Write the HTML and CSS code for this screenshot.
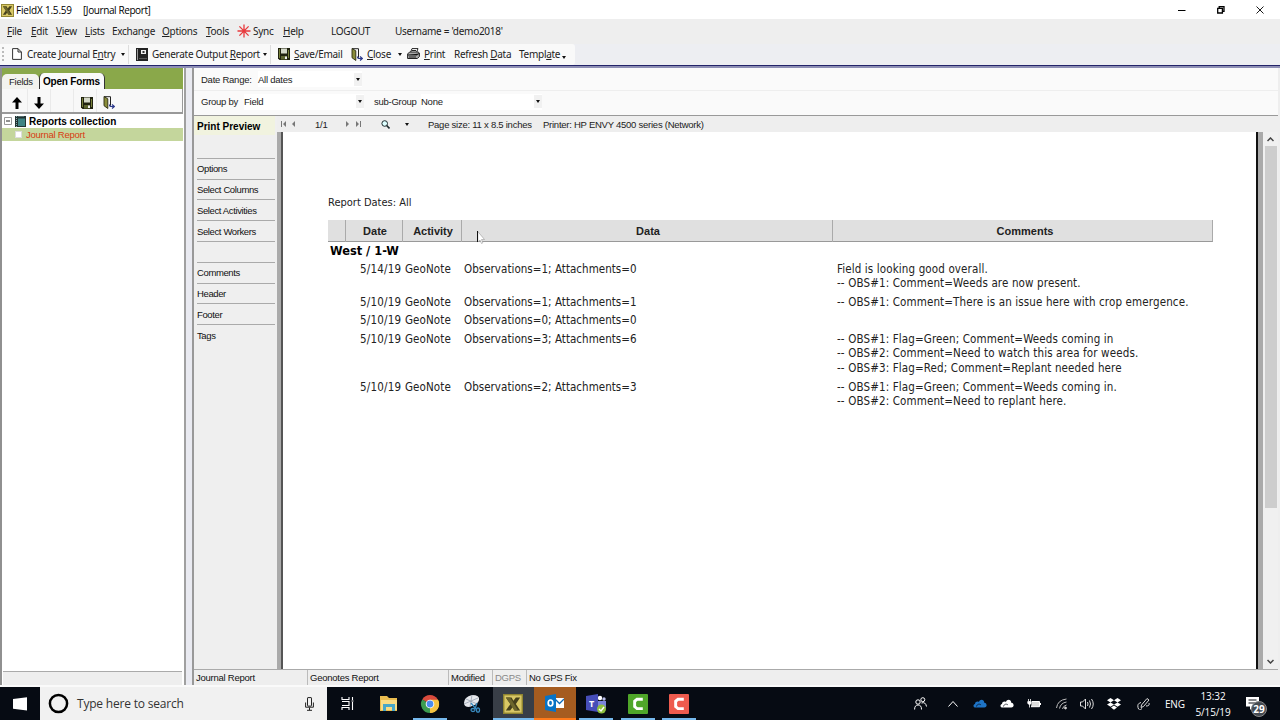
FILE: index.html
```html
<!DOCTYPE html>
<html lang="en">
<head>
    <meta charset="UTF-8">
    <meta name="viewport" content="width=device-width, initial-scale=1.0">
    <title>FieldX 1.5.59 - [Journal Report]</title>
    <link rel="stylesheet" href="styles.css">
</head>
<body>
    <svg width="0" height="0" class="defs">
        <symbol id="logo" viewBox="0 0 14 14">
            <rect width="14" height="14" fill="#8f8430"/>
            <rect x="1" y="1" width="12" height="12" fill="#d8c765"/>
            <path d="M2 2.5h4l1.3 2.3L9 2.5h3L9 7l3 4.5H8L6.700 9.200 5 11.500H2L5.200 7z" fill="#45401c"/>
            <path d="M2 2.500h3l5.500 9H8z" fill="#6c652c"/>
        </symbol>
        <symbol id="floppy" viewBox="0 0 12 12">
            <path d="M0 0h12v12H1.500L0 10.500z" fill="#20220f"/>
            <path d="M1 1h1v9H1zM10 2h1v8h-1z" fill="#77803a"/>
            <rect x="3" y="0.500" width="6" height="5" fill="#d4d8c8"/>
            <rect x="3" y="8" width="6" height="3.500" fill="#5e6630"/>
            <rect x="7" y="8.500" width="2" height="2.500" fill="#f0f0f0"/>
        </symbol>
        <symbol id="door" viewBox="0 0 12 13">
            <path d="M1 .7h6.500v9" fill="none" stroke="#222"/>
            <path d="M1 .5l3.800 2.300v9.700L1 9.700z" fill="#8a8d3a" stroke="#2b2b12" stroke-width=".9"/>
            <path d="M6.500 8.500q0 2 2 2h2M9 8.500l2.300 2L9 12.500" fill="none" stroke="#2d3a8c" stroke-width="1.200"/>
        </symbol>
        <symbol id="book" viewBox="0 0 12 13">
            <path d="M0 0h12v13H0z" fill="#222"/>
            <path d="M1 1h1v11H1z" fill="#999"/>
            <rect x="5" y="2" width="5" height="4" fill="#eee"/>
            <rect x="6.500" y="3" width="2" height="2" fill="#333"/>
            <path d="M3 10.500h8" stroke="#555"/>
        </symbol>
        <symbol id="camtasia" viewBox="0 0 20 20">
            <rect width="20" height="20" rx="1"/>
            <path d="M14.800 3.800H8.500L5.200 6.500v6.800L8.500 16h6.300v-2.800H9.600l-1.500-1.300V8l1.500-1.300h5.200z" fill="#fff"/>
        </symbol>
        <symbol id="cloud" viewBox="0 0 14 9">
            <path d="M2.500 8.500C0 8.500-.2 5.300 2 4.900 2.200 2.800 4.500 2 5.900 3 7-.3 11.200.3 11.300 3.700c3 .2 3.200 4.800 0 4.800z"/>
            <path d="M3.500 7.500C4 5 6.500 4.500 8 6" fill="none" stroke="#050a14" stroke-width=".7"/>
        </symbol>
    </svg>

    <header class="titlebar">
        <svg class="app-logo" width="13" height="13"><use href="#logo"/></svg>
        <span class="app-title">FieldX 1.5.59</span>
        <span class="doc-title">[Journal Report]</span>
        <div class="window-buttons">
            <svg width="8" height="8"><path d="M0 4.500h7.500" stroke="#000"/></svg>
            <svg width="8" height="8" fill="none" stroke="#000" stroke-width="1.300"><path d="M.7 2.300h4.700v4.700H.7zM2.200 2V.700h4.800v4.700H5.500"/></svg>
            <svg width="8" height="8" stroke="#000" stroke-width=".9"><path d="M.5.5l7 7M7.500.5l-7 7"/></svg>
        </div>
    </header>

    <nav class="menubar">
        <span class="m-file"><u>F</u>ile</span>
        <span class="m-edit"><u>E</u>dit</span>
        <span class="m-view"><u>V</u>iew</span>
        <span class="m-lists"><u>L</u>ists</span>
        <span class="m-exchange">Exchan<u>g</u>e</span>
        <span class="m-options"><u>O</u>ptions</span>
        <span class="m-tools"><u>T</u>ools</span>
        <svg class="sync-icon" width="14" height="14" viewBox="-7 -7 14 14" stroke="#e8393c" stroke-width="1.300"><path d="M0-6.500v13M-6.500 0h13M-4.600-4.600l9.200 9.200M4.600-4.600l-9.200 9.200"/></svg>
        <span class="m-sync">Sync</span>
        <span class="m-help"><u>H</u>elp</span>
        <span class="m-logout">LOGOUT</span>
        <span class="m-user">Username = 'demo2018'</span>
    </nav>

    <div class="toolbar-row">
        <div class="toolbar">
            <i class="grip"></i>
            <svg class="t-icon" width="10" height="12" viewBox="0 0 10 12"><path d="M.6.600h5.400L9.400 4v7.400H.6zM6 .600V4h3.400" fill="#fff" stroke="#333"/></svg>
            <span class="t-create">Create Journal E<u>n</u>try</span>
            <i class="caret"></i>
            <i class="sep"></i>
            <svg class="t-icon" width="12" height="13"><use href="#book"/></svg>
            <span class="t-generate">Generate Output <u>R</u>eport</span>
            <i class="caret"></i>
            <i class="sep"></i>
            <svg class="t-icon" width="12" height="12"><use href="#floppy"/></svg>
            <span class="t-save"><u>S</u>ave/Email</span>
            <svg class="t-icon" width="12" height="13"><use href="#door"/></svg>
            <span class="t-close"><u>C</u>lose</span>
            <i class="caret"></i>
            <svg class="t-icon t-printer" width="13" height="12" viewBox="0 0 13 12"><path d="M3.500 4.500L5 .6h6L9.500 4.500" fill="#fff" stroke="#222"/><path d="M.6 6l2-2h8.500l1.300 1v3.500l-2 2H.6z" fill="#aaa" stroke="#222"/><path d="M1 7h9l2-1.500M2 9h7M5 2.500h4" stroke="#222"/></svg>
            <span class="t-print"><u>P</u>rint</span>
            <span class="t-refresh">Refresh <u>D</u>ata</span>
            <span class="t-template">Templ<u>a</u>te</span>
            <i class="caret low"></i>
        </div>
    </div>

    <main class="workspace">
        <aside class="forms-panel">
            <div class="tabs">
                <span class="tab">Fields</span>
                <span class="tab active">Open Forms</span>
            </div>
            <div class="forms-tools">
                <span><svg width="10" height="12"><path d="M5 0l5 5.500H6.500V12h-3V5.500H0z"/></svg></span>
                <span><svg width="10" height="12"><path d="M5 12l5-5.500H6.500V0h-3v6.500H0z"/></svg></span>
                <span></span>
                <span class="save"><svg width="12" height="12"><use href="#floppy"/></svg></span>
                <span class="last"><svg width="12" height="13"><use href="#door"/></svg></span>
            </div>
            <div class="tree">
                <div class="tree-root">
                    <svg width="8" height="8"><path d="M.5.5h7v7h-7z" fill="#fff" stroke="#999"/><path d="M2 4h4" stroke="#222"/></svg>
                    <svg width="11" height="11"><path d="M0 0h11v11H0z" fill="#233"/><path d="M3 2.500h7V10H3z" fill="#3f8484"/><path d="M1.500 0v11M4 0v2M6 0v2M8 0v2" stroke="#8aa" stroke-dasharray="1 1"/></svg>
                    <span>Reports collection</span>
                </div>
                <div class="tree-item">
                    <i class="checkbox"></i>
                    <span>Journal Report</span>
                </div>
            </div>
            <div class="forms-status"></div>
        </aside>
        <div class="splitter"></div>

        <section class="report-panel">
            <div class="filter-row">
                <label class="l-range">Date Range:</label>
                <div class="select range"><span>All dates</span><b><i class="caret"></i></b></div>
            </div>
            <div class="filter-row second">
                <label class="l-group">Group by</label>
                <div class="select group"><span>Field</span><b><i class="caret"></i></b></div>
                <label class="l-sub">sub-Group</label>
                <div class="select sub"><span>None</span><b><i class="caret"></i></b></div>
            </div>
            <div class="report-body">
                <nav class="side-menu">
                    <div class="current"><span>Print Preview</span></div>
                    <div class="blank first"></div>
                    <div><span>Options</span></div>
                    <div><span>Select Columns</span></div>
                    <div><span>Select Activities</span></div>
                    <div><span>Select Workers</span></div>
                    <div class="blank"></div>
                    <div><span>Comments</span></div>
                    <div><span>Header</span></div>
                    <div><span>Footer</span></div>
                    <div class="end"><span>Tags</span></div>
                </nav>
                <div class="preview">
                    <div class="preview-bar">
                        <svg class="first-page" width="5" height="6" fill="#777"><path d="M0 0h1v6H0zM5 0v6L2 3z"/></svg>
                        <svg class="prev-page" width="3" height="6" fill="#777"><path d="M3 0v6L0 3z"/></svg>
                        <span class="page-no">1/1</span>
                        <svg class="next-page" width="3" height="6" fill="#777"><path d="M0 0v6l3-3z"/></svg>
                        <svg class="last-page" width="5" height="6" fill="#777"><path d="M4 0h1v6H4zM0 0v6l3-3z"/></svg>
                        <svg class="zoom" width="9" height="9" viewBox="0 0 9 9" fill="#dff" stroke="#1d2b2e"><circle cx="3.700" cy="3.500" r="2.800"/><path d="M5.700 5.500l2.800 3" stroke-width="1.600"/></svg>
                        <i class="caret"></i>
                        <span class="page-size">Page size: 11 x 8.5 inches</span>
                        <span class="printer">Printer: HP ENVY 4500 series (Network)</span>
                    </div>
                    <div class="canvas">
                        <article class="paper">
                            <p class="dates">Report Dates: All</p>
                            <div class="grid head">
                                <span></span>
                                <span class="h-date">Date</span>
                                <span class="h-activity">Activity</span>
                                <span class="h-data">Data</span>
                                <span class="h-comments">Comments</span>
                            </div>
                            <h2 class="field-name">West / 1-W</h2>
                            <div class="grid row">
                                <span class="date">5/14/19</span>
                                <span class="act">GeoNote</span>
                                <span class="data">Observations=1; Attachments=0</span>
                                <span class="note">Field is looking good overall.<br>-- OBS#1: Comment=Weeds are now present.</span>
                            </div>
                            <div class="grid row">
                                <span class="date">5/10/19</span>
                                <span class="act">GeoNote</span>
                                <span class="data">Observations=1; Attachments=1</span>
                                <span class="note">-- OBS#1: Comment=There is an issue here with crop emergence.</span>
                            </div>
                            <div class="grid row">
                                <span class="date">5/10/19</span>
                                <span class="act">GeoNote</span>
                                <span class="data">Observations=0; Attachments=0</span>
                                <span class="note"></span>
                            </div>
                            <div class="grid row">
                                <span class="date">5/10/19</span>
                                <span class="act">GeoNote</span>
                                <span class="data">Observations=3; Attachments=6</span>
                                <span class="note">-- OBS#1: Flag=Green; Comment=Weeds coming in<br>-- OBS#2: Comment=Need to watch this area for weeds.<br>-- OBS#3: Flag=Red; Comment=Replant needed here</span>
                            </div>
                            <div class="grid row">
                                <span class="date">5/10/19</span>
                                <span class="act">GeoNote</span>
                                <span class="data">Observations=2; Attachments=3</span>
                                <span class="note">-- OBS#1: Flag=Green; Comment=Weeds coming in.<br>-- OBS#2: Comment=Need to replant here.</span>
                            </div>
                        </article>
                        <div class="scrollbar">
                            <svg width="7" height="5"><path d="M.5 4l3-3 3 3" fill="none" stroke="#444" stroke-width="1.500"/></svg>
                            <i class="thumb"></i>
                            <svg class="down" width="7" height="5"><path d="M.5 1l3 3 3-3" fill="none" stroke="#444" stroke-width="1.500"/></svg>
                        </div>
                    </div>
                </div>
            </div>
            <footer class="statusbar">
                <span class="s-name">Journal Report</span>
                <span class="s-report">Geonotes Report</span>
                <span class="s-mod">Modified</span>
                <span class="s-dgps">DGPS</span>
                <span class="s-fix">No GPS Fix</span>
            </footer>
        </section>
    </main>

    <svg class="cursor" width="8" height="14" viewBox="0 0 8 14"><path d="M.8.5v10.500l2.200-2 1.500 3.500 1.300-.6L4.500 8.500h3z" fill="#fff" stroke="#999" stroke-width=".6"/><path d="M.5 0v11" stroke="#111"/></svg>

    <footer class="taskbar">
        <div class="start"><svg width="14" height="14"><path d="M0 2l14-1.700v13.200L0 11.700z" fill="#fff"/></svg></div>
        <div class="search">
            <svg width="21" height="21"><circle cx="10.500" cy="10.500" r="8.600" fill="none" stroke="#000" stroke-width="2.500"/></svg>
            <span>Type here to search</span>
            <svg class="mic" width="9" height="14" fill="none" stroke="#222"><rect x="2.500" y=".6" width="4" height="8.500" rx=".5"/><path d="M.6 5.500v4.700h7.800V5.500M4.500 10.500v2.700M2 13.300h5"/></svg>
        </div>
        <div class="app taskview"><svg width="14" height="13" fill="none" stroke="#fff" stroke-width="1.100"><path d="M1 0v2.500h7V0M1 13v-2.500h7V13M1 4.500h7v4H1M11.500 0v3M11.500 5v8M10.500 4h2"/></svg></div>
        <div class="app"><svg width="18" height="15"><path d="M0 0h7l2 2h8v13H0z" fill="#e9bd50"/><path d="M1 4h16v10H1z" fill="#f9dc84"/><path d="M3 15V8h12v7h-3v-4H6v4z" fill="#47a7c8"/></svg></div>
        <div class="app running"><svg width="20" height="20" viewBox="-10 -10 20 20"><path d="M0 0L-7.800-4.500A9 9 0 0 1 7.800-4.500z" fill="#d94b3d"/><path d="M0 0L7.800-4.500A9 9 0 0 1 0 9z" fill="#f4c342"/><path d="M0 0L0 9A9 9 0 0 1-7.800-4.500z" fill="#3c9c50"/><path d="M0-4.300h8A9 9 0 0 1 0 9L3.800 2z" fill="#f4c342"/><circle r="4.300" fill="#fff"/><circle r="3.400" fill="#4b8ced"/></svg></div>
        <div class="app"><svg width="20" height="20"><path d="M2 9q0-6 8-8 8 0 7 5-1 5-10 7-5 0-5-4z" fill="#e6e8ec"/><path d="M10 1l-2 12M4 5l11 5M2 10L16 4" stroke="#8b98a8" stroke-width=".7"/><g fill="none" stroke="#398bc0" stroke-width="1.300"><path d="M9 9l5 6M15 9l-2 6"/><ellipse cx="11" cy="16" rx="2" ry="1.500"/><ellipse cx="16" cy="16" rx="1.500" ry="2.200"/></g></svg></div>
        <div class="app running fieldx"><svg width="20" height="20"><use href="#logo"/></svg></div>
        <div class="app running outlook"><svg width="20" height="18"><path d="M10 4h9v10h-9z" fill="#fff"/><path d="M10 5l4.500 4.500L19 5" fill="none" stroke="#0b69b6" stroke-width="1.300"/><path d="M0 2l11-2v18L0 16z" fill="#0873c5"/><ellipse cx="5.500" cy="9" rx="2.300" ry="3" fill="none" stroke="#fff" stroke-width="1.700"/></svg></div>
        <div class="app running"><svg width="20" height="20"><circle cx="14" cy="4" r="2.200" fill="#fff"/><circle cx="18" cy="5" r="1.700" fill="#b9bdea"/><path d="M11 7h9v7l-6 3h-3z" fill="#7b83dc"/><path d="M0 2l12-2v18L0 16z" fill="#464eb8"/><text x="3" y="13" class="teams-letter">T</text><circle cx="15.500" cy="15" r="4.500" fill="#8fc13f"/><path d="M13 15l2 2 3-4" fill="none" stroke="#fff" stroke-width="1.400"/></svg></div>
        <div class="app running"><svg width="20" height="20" fill="#4fa629"><use href="#camtasia"/></svg></div>
        <div class="app running"><svg width="20" height="20" fill="#ee5b4e"><use href="#camtasia"/></svg></div>
        <div class="tray">
            <svg class="people" width="13" height="13" fill="none" stroke="#fff"><circle cx="4" cy="5" r="2.200"/><path d="M.6 12.500q0-4.500 3.500-4.500t3.400 4.500"/><circle cx="8.800" cy="2.700" r="2"/><path d="M7.500 6q4-1.500 5 3.500"/></svg>
            <svg class="up" width="10" height="6" fill="none" stroke="#fff"><path d="M.5 5.500l4.500-5 4.500 5"/></svg>
            <svg class="onedrive" width="14" height="9" fill="#1e74c6"><use href="#cloud"/></svg>
            <svg class="onedrive" width="14" height="9" fill="#fff"><use href="#cloud"/></svg>
            <svg class="battery" width="14" height="9"><path d="M5 2.500h7.500v5.200H4" fill="#ddd" stroke="#fff"/><path d="M13 4h1v2h-1z" fill="#fff"/><path d="M.8 2.500h3.400v2q-1.700 2-3.400 0zM1.500 0v2M3.500 0v2M2.500 5v3.500" fill="#fff" stroke="#fff" stroke-width=".8"/></svg>
            <svg class="wifi" width="12" height="12" fill="none" stroke="#bbb"><path d="M.5 10q1-8 10-9M3.500 10.500q1-5.500 7-6.500M6.500 11q.5-3 4-4"/><circle cx="9.500" cy="10" r="1" fill="#fff"/></svg>
            <svg class="sound" width="14" height="12" fill="none" stroke="#ddd"><path d="M.5 4v4h2l3 3V1l-3 3zM7.500 4q1 2 0 4M9.500 2.500q2 3.500 0 7M11.500 1q3.500 5 0 10"/></svg>
            <svg class="dropbox" width="14" height="12" fill="#fff"><path d="M3.500 0L7 2.200 3.500 4.400 0 2.200zM10.500 0L14 2.200l-3.500 2.200L7 2.200zM3.500 4.400L7 6.600 3.500 8.800 0 6.600zM10.500 4.400L14 6.600l-3.500 2.200L7 6.600zM7 7.500l3 2L7 11.700l-3-2.200z"/></svg>
            <svg class="pen" width="13" height="13" fill="none" stroke="#ddd"><path d="M4.500 8L10 1.500l2 1.500-5.500 6.500-2.500 1zM4 5.500q-4 1-3 5t4 1M9 9q4 0 3-3"/></svg>
            <span class="lang">ENG</span>
            <span class="clock">13:32<br>5/15/19</span>
            <div class="action">
                <svg width="13" height="13"><path d="M0 0h13v9.500H7L4 13V9.500H0z" fill="#fff"/><path d="M2.500 3h8M2.500 6h8" stroke="#0a0e16"/></svg>
                <span class="badge">29</span>
            </div>
        </div>
    </footer>
</body>
</html>
```

FILE: styles.css
```css
* {
    margin: 0;
    padding: 0;
    box-sizing: border-box;
}

body {
    width: 1280px;
    height: 720px;
    overflow: hidden;
    display: flex;
    flex-direction: column;
    background: #eee;
    color: #222;
    font-family: "Liberation Sans", Arial, sans-serif;
    font-size: 10px;
}

svg {
    display: block;
    flex: none;
}

span,
label {
    white-space: nowrap;
}

.defs {
    position: absolute;
}

.caret {
    flex: none;
    border: 2.5px solid transparent;
    border-top: 3px solid #111;
    border-bottom: 0;
}

/* title and menus */
.titlebar {
    height: 19px;
    flex: none;
    display: flex;
    align-items: center;
    background: #fff;
    padding: 1px 16px 0 1px;
    font-family: "Open Sans", sans-serif;
    font-size: 10px;
    letter-spacing: -0.2px;
    color: #000;
}

.app-title {
    width: 67px;
    margin-left: 2px;
}

.doc-title {
    letter-spacing: -0.4px;
}

.window-buttons {
    display: flex;
    gap: 31px;
    margin-left: auto;
}

.menubar {
    height: 25px;
    flex: none;
    display: flex;
    align-items: center;
    padding: 0 0 1px 7px;
    font-family: "Noto Sans", sans-serif;
    font-size: 10px;
    letter-spacing: -0.28px;
}

.menubar span {
    flex: none;
}

.menubar u,
.toolbar u {
    text-underline-offset: 1px;
}

.m-file { width: 24px; }
.m-edit { width: 25px; }
.m-view { width: 29px; }
.m-lists { width: 27px; }
.m-exchange { width: 50px; }
.m-options { width: 44px; }
.m-tools { width: 31px; }
.sync-icon { margin-right: 2px; }
.m-sync { width: 30px; }
.m-help { width: 48px; }
.m-logout { width: 64px; }

.toolbar-row {
    height: 24px;
    flex: none;
    border-bottom: 2px solid #8e8fb5;
    background: #edeef2;
    box-shadow: inset 0 -1px #24246a;
}

.toolbar {
    width: 575px;
    height: 21px;
    display: flex;
    align-items: center;
    background: #f9f9f9;
    border-radius: 0 3px 3px 0;
    padding-bottom: 1px;
    font-family: "Noto Sans", sans-serif;
    font-size: 10px;
    letter-spacing: -0.28px;
}

.toolbar span {
    flex: none;
}

.grip {
    width: 3px;
    height: 14px;
    margin: 0 7px 0 2px;
    border-left: 2px dotted #bbb;
}

.sep {
    width: 1px;
    height: 19px;
    margin: 0 7px 0 3px;
    background: #ddd;
}

.t-create { width: 94px; margin-left: 5px; }
.t-generate { width: 111px; margin-left: 4px; }
.t-save { width: 57px; margin-left: 4px; }
.t-close { width: 31px; margin-left: 4px; }
.t-printer { margin: 0 4px 0 5px; }
.t-print { width: 30px; }
.t-refresh { width: 65px; }
.t-template { width: 43px; }

.low {
    margin-top: 7px;
}

/* left panel */
.workspace {
    height: 619px;
    flex: none;
    display: flex;
    border-bottom: 2px solid #fafafa;
    font-size: 9.5px;
    letter-spacing: -0.25px;
}

.forms-panel {
    width: 186px;
    display: flex;
    flex-direction: column;
    border-left: 2px solid #909090;
    border-right: 2px solid #a0a0a0;
    background: #fff;
}

.tabs {
    width: 181px;
    height: 21px;
    display: flex;
    align-items: flex-end;
    background: #8aa84a;
}

.tab {
    width: 37px;
    height: 15px;
    line-height: 15px;
    padding-left: 7px;
    background: #f3f3ee;
    border-radius: 5px 5px 0 0;
}

.active {
    width: 66px;
    height: 16px;
    line-height: 17px;
    padding-left: 3px;
    font-size: 10px;
    font-weight: bold;
    background: #fafafa;
    border-left: 1px solid #333;
    border-right: 1px solid #333;
    letter-spacing: -0.2px;
    color: #000;
}

.forms-tools {
    width: 181px;
    height: 25px;
    display: flex;
    background: #f8f8f8;
    border-bottom: 2px solid #999;
    border-right: 1px solid #999;
}

.forms-tools span {
    width: 23px;
    display: flex;
    justify-content: center;
    align-items: center;
    border-right: 1px solid #eaeaea;
    padding-top: 4px;
}

.forms-tools span:first-child {
    width: 26px;
    padding-left: 4px;
}

.forms-tools .save {
    padding-left: 3px;
}

.forms-tools .last {
    border: 0;
}

.tree {
    flex: 1;
    padding: 0 1px 0 0;
}

.tree-root {
    height: 14px;
    display: flex;
    align-items: center;
    padding-left: 2px;
    font-size: 10px;
    font-weight: bold;
    letter-spacing: 0;
    color: #000;
}

.tree-root svg + svg {
    margin: 0 3px 0 3px;
}

.tree-item {
    height: 13px;
    display: flex;
    align-items: center;
    background: #c4d69c;
    color: #d83c12;
}

.checkbox {
    width: 7px;
    height: 7px;
    margin: 0 4px 0 13px;
    background: #fff;
    border: 1px solid #ddd;
}

.forms-status {
    height: 14px;
    margin: 0 2px 0 1px;
    background: #eee;
    border-top: 1px solid #aaa;
}

.splitter {
    width: 6px;
    background: #e9eaf1;
}

/* report panel */
.report-panel {
    width: 1086px;
    display: flex;
    flex-direction: column;
    border-left: 2px solid #999;
}

.filter-row {
    height: 23px;
    flex: none;
    display: flex;
    align-items: center;
    padding-left: 7px;
    background: #fafafa;
    border-bottom: 1px solid #eee;
}

.second {
    height: 25px;
    padding-bottom: 3px;
    border-bottom: 1px solid #999;
}

.select {
    height: 16px;
    display: flex;
    align-items: center;
    justify-content: space-between;
    background: #fff;
}

.select b {
    width: 8px;
    height: 13px;
    display: flex;
    align-items: center;
    justify-content: center;
    background: #f1f1f1;
}

.l-range { width: 57px; }
.l-group { width: 43px; }
.l-sub { width: 47px; }
.range { width: 104px; }
.group { width: 120px; margin-right: 10px; }
.sub { width: 121px; }

.report-body {
    flex: 1;
    display: flex;
    min-height: 0;
}

.side-menu {
    width: 83px;
    padding-right: 2px;
    background: #efefef;
    letter-spacing: -0.38px;
}

.side-menu div {
    height: 20.8px;
    margin: 0 0 0 3px;
    display: flex;
    align-items: center;
    border-bottom: 1px solid #aaa;
    color: #111;
}

.side-menu .current {
    height: 19px;
    margin: 0;
    padding: 2px 0 0 3px;
    background: #f1f3df;
    border-bottom: 0;
    font-weight: bold;
    font-size: 10px;
    letter-spacing: 0;
    color: #000;
}

.side-menu .first {
    height: 23.8px;
}

.side-menu .end {
    border: 0;
}

.preview {
    flex: 1;
    display: flex;
    flex-direction: column;
}

.preview-bar {
    height: 16px;
    flex: none;
    display: flex;
    align-items: center;
    padding-left: 4px;
}

.prev-page { margin-left: 6px; }
.page-no { width: 31px; margin-left: 20px; }
.last-page { margin-left: 7px; }
.zoom { margin: 0 15px 0 20px; }
.page-size { width: 115px; margin-left: 19px; }

.canvas {
    flex: 1;
    display: flex;
}

.paper {
    width: 981px;
    padding: 63px 0 0 45px;
    background: #fff;
    border-left: 6px solid #555;
    border-image: linear-gradient(90deg, #aaa 0 4px, #555 4px 6px, #fff 6px 977px) 0 0 0 6;
    box-shadow: inset -2px 0 #111;
    color: #222;
    font-family: "DejaVu Sans Condensed", Tahoma, sans-serif;
    font-size: 11.5px;
    letter-spacing: 0;
}

.dates {
    height: 25px;
    line-height: 15px;
    font-size: 11px;
}

.grid {
    display: grid;
    grid-template-columns: 18px 57px 59px 371px 379px;
}

.head {
    width: 885px;
    height: 22px;
    background: #e0e0e0;
    border-bottom: 1px solid #999;
    border-right: 1px solid #aaa;
    font-family: "Liberation Sans", Arial, sans-serif;
    font-size: 11px;
    font-weight: bold;
    line-height: 22px;
    text-align: center;
}

.head span {
    border-right: 1px solid #aaa;
    padding-left: 2px;
}

.head span:last-child {
    border: 0;
    padding-left: 5px;
}

.field-name {
    height: 19.5px;
    padding-left: 2px;
    line-height: 18px;
    font-size: 12.7px;
    color: #000;
}

.row {
    line-height: 14.7px;
    padding-bottom: 3.8px;
}

.date {
    grid-column: 1 / 3;
    padding-left: 32px;
    letter-spacing: 0.2px;
}

.act {
    padding-left: 2px;
    letter-spacing: 0.1px;
}

.data {
    padding-left: 2px;
    letter-spacing: 0.03px;
}

.note {
    padding-left: 4px;
    letter-spacing: 0.13px;
}

.scrollbar {
    width: 20px;
    display: flex;
    flex-direction: column;
    align-items: center;
    padding: 5px 1px 5px 6px;
    background: #f0f0f0;
    box-shadow: inset 5px 0 #aaa;
}

.thumb {
    width: 12px;
    height: 362px;
    margin: 4px 0 auto;
    background: #cdcdcd;
}

.statusbar {
    height: 16px;
    flex: none;
    display: flex;
    border-top: 1px solid #aaa;
    background: #eee;
    color: #111;
}

.statusbar span {
    height: 15px;
    line-height: 16px;
    border-left: 1px solid #bbb;
    padding-left: 2px;
}

.statusbar .s-name { width: 113px; border: 0; }
.s-report { width: 141px; }
.s-mod { width: 44px; }
.statusbar .s-dgps { width: 34px; color: #888; }

.cursor {
    position: absolute;
    left: 477px;
    top: 231px;
}

/* taskbar */
.taskbar {
    height: 33px;
    flex: none;
    display: flex;
    background: #060b13;
    color: #fff;
    font-family: "Open Sans", sans-serif;
}

.start {
    width: 40px;
    display: flex;
    align-items: center;
    justify-content: center;
}

.search {
    width: 287px;
    display: flex;
    align-items: center;
    padding: 0 13px 0 8px;
    background: #f1f1f1;
    color: #333;
    font-size: 12px;
    letter-spacing: -0.2px;
}

.search span {
    margin-left: 8px;
}

.mic {
    margin-left: auto;
}

.app {
    width: 41.5px;
    display: flex;
    align-items: center;
    justify-content: center;
}

.taskview {
    width: 41px;
}

.running {
    background: linear-gradient(#76b9ed, #76b9ed) center bottom / 34px 2px no-repeat;
}

.fieldx {
    background-color: #383e47;
    background-size: 100% 2px;
}

.outlook {
    background: #a55c20;
    border-bottom: 2px solid #ff7a1a;
}

.teams-letter {
    fill: #fff;
    font: bold 9px "Open Sans", sans-serif;
}

.tray {
    margin-left: auto;
    display: flex;
    align-items: center;
    padding-right: 10px;
    font-size: 10px;
}

.people { margin-right: 21px; }
.up { margin-right: 15px; }
.onedrive { margin-right: 13px; }
.battery { margin-right: 15px; }
.wifi { margin-right: 12px; }
.sound { margin-right: 13px; }
.dropbox { margin-right: 16px; }
.pen { margin-right: 15px; }
.lang { width: 30px; letter-spacing: -0.2px; }

.clock {
    width: 36px;
    line-height: 16px;
    text-align: center;
    margin-right: 15px;
    letter-spacing: -0.1px;
}

.action {
    width: 24px;
    position: relative;
}

.badge {
    position: absolute;
    left: 5px;
    top: 4px;
    width: 16px;
    height: 16px;
    border-radius: 50%;
    background: #444a52;
    border: 1px solid #888;
    line-height: 14px;
    text-align: center;
    font-weight: bold;
    font-size: 10px;
}
```
